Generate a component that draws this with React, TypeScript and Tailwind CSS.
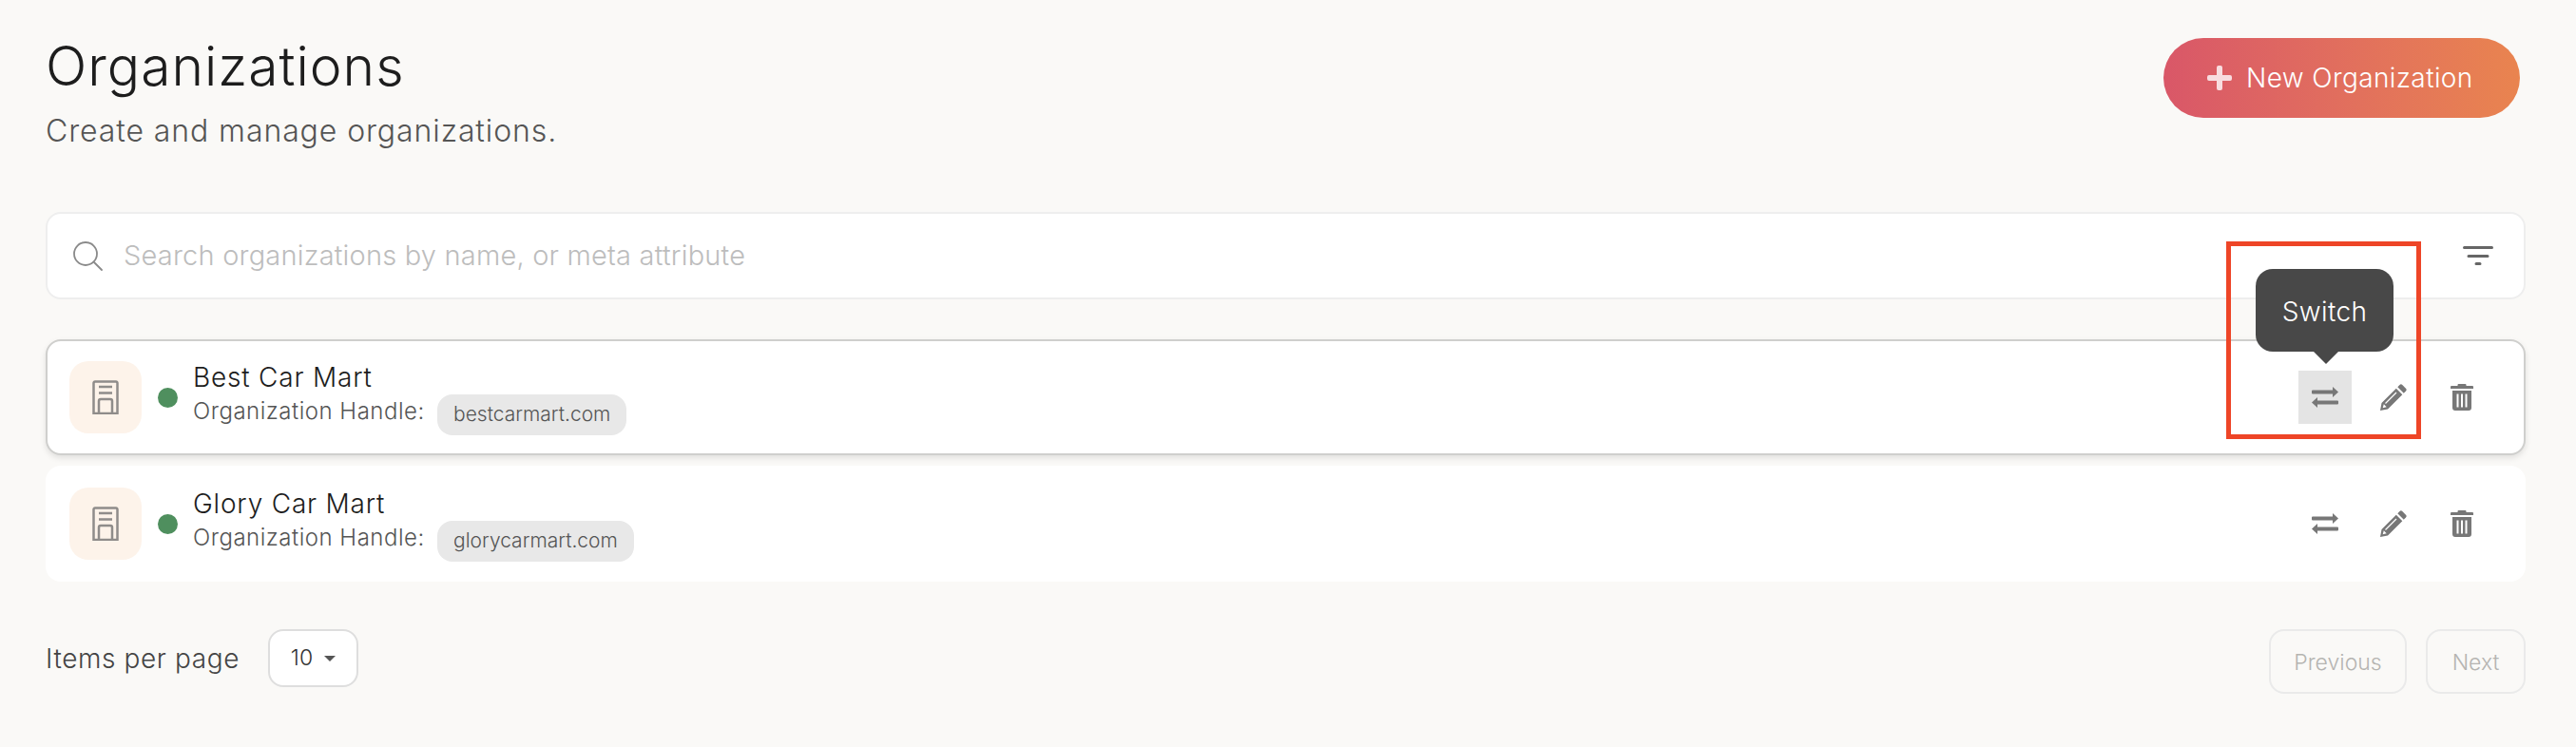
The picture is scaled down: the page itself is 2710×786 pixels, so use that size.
import React from 'react';

const FONT = "font-['Inter','Noto_Sans',sans-serif]";

const ORGS = [
  { name: 'Best Car Mart', handle: 'bestcarmart.com', hovered: true },
  { name: 'Glory Car Mart', handle: 'glorycarmart.com', hovered: false },
];

const SearchIcon = () => (
  <svg width="32" height="32" viewBox="0 0 32 32" fill="none" stroke="#8a8a8a" strokeWidth="1.8" strokeLinecap="round">
    <circle cx="14" cy="14" r="12" />
    <path d="M23 23l8 8" />
  </svg>
);

const FilterIcon = () => (
  <svg width="32" height="20" viewBox="0 0 32 20" fill="none" stroke="#666666" strokeWidth="3" strokeLinecap="round">
    <path d="M1.5 1.5h29M6 10.500h20M14 18.500h4" />
  </svg>
);

const BuildingIcon = () => (
  <svg width="28" height="36" viewBox="0 0 28 36" fill="none" stroke="#8f8c8a" strokeWidth="2.500">
    <path d="M1.500 35V3a1.500 1.500 0 0 1 1.500-1.500h22a1.500 1.500 0 0 1 1.500 1.500V35z" />
    <path d="M7 7h14M7 13.500h14" />
    <path d="M7 35V22a2 2 0 0 1 2-2h10a2 2 0 0 1 2 2V35" />
  </svg>
);

const SwitchIcon = () => (
  <svg width="28" height="22" viewBox="0 0 28 22" fill="#777777">
    <path d="M1 3.500h21V0l6 5.500-6 5.500V7.500H1a1 1 0 0 1-1-1v-2a1 1 0 0 1 1-1z" />
    <path d="M27 14.500H6V11l-6 5.500L6 22v-3.500h21a1 1 0 0 0 1-1v-2a1 1 0 0 0-1-1z" />
  </svg>
);

const PencilIcon = () => (
  <svg width="28" height="28" viewBox="0 0 28 28" fill="#777777">
    <path d="M20.500 1a2 2 0 0 1 2.800 0l3.700 3.700a2 2 0 0 1 0 2.800l-2.200 2.200-6.500-6.500z" />
    <path fillRule="evenodd" d="M16.800 4.700l6.500 6.500L8 26.500 0 28l1.500-8zM3.800 21.300l-1.100 4 4-1.100z" />
    <path d="M5.500 20.500L17 9" stroke="#ffffff" strokeWidth="1.200" fill="none" />
  </svg>
);

const TrashIcon = () => (
  <svg width="24" height="28" viewBox="0 0 24 28" fill="#777777">
    <path d="M8.500 0h7a1 1 0 0 1 1 1v1H23a1 1 0 0 1 1 1v2H0V3a1 1 0 0 1 1-1h6.500V1a1 1 0 0 1 1-1z" />
    <path
      fillRule="evenodd"
      d="M2 7h20v18a3 3 0 0 1-3 3H5a3 3 0 0 1-3-3zM6.500 10.500v14h2v-14zM11 10.500v14h2v-14zM15.500 10.500v14h2v-14z"
    />
  </svg>
);

function OrgRow({ name, handle, hovered }: { name: string; handle: string; hovered: boolean }) {
  return (
    <div
      className={`flex items-center h-[122px] pl-[23px] pr-[53px] bg-white rounded-[16px] border-2 ${
        hovered ? 'border-[#cfcfcd] shadow-[0_3px_6px_rgba(0,0,0,0.10)]' : 'border-transparent'
      }`}
    >
      <div className="flex items-center justify-center w-[76px] h-[76px] rounded-[20px] bg-[#fdf3ea]">
        <BuildingIcon />
      </div>
      <div className="ml-[17px] w-[21px] h-[21px] rounded-full bg-[#4f8f5e]" />
      <div className="ml-[16px] flex flex-col -mt-[2px]">
        <div className="text-[28px] leading-[32px] tracking-[0.8px] font-light text-[#1d1d1d]">{name}</div>
        <div className="flex items-center h-[40px]">
          <span className="w-[243px] text-[24px] tracking-[0.5px] font-light text-[#555555] whitespace-nowrap">Organization Handle:</span>
          <span className="ml-[14px] mt-[6px] flex items-center h-[43px] px-[17px] rounded-[16px] bg-[#e8e8e8] text-[21px] font-light text-[#555555]">
            {handle}
          </span>
        </div>
      </div>
      <div className="ml-auto flex items-center">
        <div className="relative flex items-center justify-center w-[56px] h-[56px]">
          {hovered && (
            <>
              <div className="absolute inset-0 bg-[#e4e4e4]" />
              <div className="absolute left-[-45px] bottom-[76px] flex items-center justify-center w-[145px] h-[87px] pt-[3px] rounded-[18px] bg-[#484848] text-[28px] tracking-[0.4px] font-light text-white">
                Switch
              </div>
              <div className="absolute left-[16px] top-[-20px] w-0 h-0 border-x-[13px] border-x-transparent border-t-[13px] border-t-[#484848]" />
            </>
          )}
          <span className="relative flex">
            <SwitchIcon />
          </span>
        </div>
        <div className="flex items-center justify-center w-[28px] ml-[30px]">
          <PencilIcon />
        </div>
        <div className="flex items-center justify-center w-[24px] ml-[46px]">
          <TrashIcon />
        </div>
      </div>
    </div>
  );
}

export default function App() {
  return (
    <div className={`relative min-h-[786px] bg-[#faf9f7] pl-[48px] pr-[53px] ${FONT}`}>
      {/* Header */}
      <div className="flex items-start justify-between pt-[36px]">
        <div>
          <h1 className="text-[57px] leading-[68px] tracking-[1px] font-light text-[#1d1d1d]">Organizations</h1>
          <p className="text-[32px] leading-[40px] tracking-[0.9px] mt-[14px] font-light text-[#555555]">Create and manage organizations.</p>
        </div>
        <button className="flex items-center h-[84px] w-[375px] mt-[4px] mr-[6px] pl-[46px] rounded-full bg-gradient-to-r from-[#d95768] to-[#e9844f] text-[28px] tracking-[0.4px] font-light text-white">
          <svg width="26" height="26" viewBox="0 0 26 26" fill="#f8dcdf">
            <path d="M10 2a2 2 0 0 1 2-2h2a2 2 0 0 1 2 2v8h8a2 2 0 0 1 2 2v2a2 2 0 0 1-2 2h-8v8a2 2 0 0 1-2 2h-2a2 2 0 0 1-2-2v-8H2a2 2 0 0 1-2-2v-2a2 2 0 0 1 2-2h8z" />
          </svg>
          <span className="ml-[15px]">New Organization</span>
        </button>
      </div>

      {/* Search */}
      <div className="flex items-center h-[92px] mt-[65px] pl-[26px] pr-[32px] bg-white border-2 border-[#eeeeee] rounded-[16px]">
        <SearchIcon />
        <span className="ml-[22px] text-[29px] tracking-[0.2px] font-light text-[#bdbdbd]">Search organizations by name, or meta attribute</span>
        <span className="ml-auto flex">
          <FilterIcon />
        </span>
      </div>

      {/* List */}
      <div className="flex flex-col gap-[11px] mt-[42px]">
        {ORGS.map((org) => (
          <OrgRow key={org.handle} {...org} />
        ))}
      </div>

      {/* Pagination */}
      <div className="flex items-start justify-between mt-[50px]">
        <div className="flex items-center">
          <span className="w-[203px] text-[28px] tracking-[0.6px] font-light text-[#444444] whitespace-nowrap">Items per page</span>
          <div className="ml-[31px] flex items-center justify-center gap-[12px] w-[95px] h-[61px] bg-white border-2 border-[#dedede] rounded-[16px] text-[23px] font-light text-[#333333]">
            10
            <span className="w-0 h-0 border-x-[6px] border-x-transparent border-t-[6px] border-t-[#555555]" />
          </div>
        </div>
        <div className="flex items-center gap-[20px]">
          <div className="flex items-center justify-center w-[145px] h-[68px] pt-[2px] border-2 border-[#eaeaea] rounded-[16px] text-[23px] font-light text-[#b5b4b1]">
            Previous
          </div>
          <div className="flex items-center justify-center w-[105px] h-[68px] pt-[2px] border-2 border-[#eaeaea] rounded-[16px] text-[23px] font-light text-[#b5b4b1]">
            Next
          </div>
        </div>
      </div>

      {/* Red annotation around the switch tooltip */}
      <div className="absolute left-[2342px] top-[254px] w-[205px] h-[208px] border-[5px] border-[#ee4527] pointer-events-none" />
    </div>
  );
}
